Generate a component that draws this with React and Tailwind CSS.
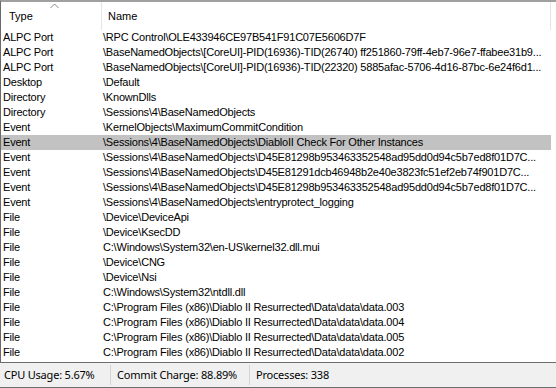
import React from "react";

const rows = [
  ["ALPC Port", "\\RPC Control\\OLE433946CE97B541F91C07E5606D7F"],
  ["ALPC Port", "\\BaseNamedObjects\\[CoreUI]-PID(16936)-TID(26740) ff251860-79ff-4eb7-96e7-ffabee31b9..."],
  ["ALPC Port", "\\BaseNamedObjects\\[CoreUI]-PID(16936)-TID(22320) 5885afac-5706-4d16-87bc-6e24f6d1..."],
  ["Desktop", "\\Default"],
  ["Directory", "\\KnownDlls"],
  ["Directory", "\\Sessions\\4\\BaseNamedObjects"],
  ["Event", "\\KernelObjects\\MaximumCommitCondition"],
  ["Event", "\\Sessions\\4\\BaseNamedObjects\\DiabloII Check For Other Instances", true],
  ["Event", "\\Sessions\\4\\BaseNamedObjects\\D45E81298b953463352548ad95dd0d94c5b7ed8f01D7C..."],
  ["Event", "\\Sessions\\4\\BaseNamedObjects\\D45E81291dcb46948b2e40e3823fc51ef2eb74f901D7C..."],
  ["Event", "\\Sessions\\4\\BaseNamedObjects\\D45E81298b953463352548ad95dd0d94c5b7ed8f01D7C..."],
  ["Event", "\\Sessions\\4\\BaseNamedObjects\\entryprotect_logging"],
  ["File", "\\Device\\DeviceApi"],
  ["File", "\\Device\\KsecDD"],
  ["File", "C:\\Windows\\System32\\en-US\\kernel32.dll.mui"],
  ["File", "\\Device\\CNG"],
  ["File", "\\Device\\Nsi"],
  ["File", "C:\\Windows\\System32\\ntdll.dll"],
  ["File", "C:\\Program Files (x86)\\Diablo II Resurrected\\Data\\data\\data.003"],
  ["File", "C:\\Program Files (x86)\\Diablo II Resurrected\\Data\\data\\data.004"],
  ["File", "C:\\Program Files (x86)\\Diablo II Resurrected\\Data\\data\\data.005"],
  ["File", "C:\\Program Files (x86)\\Diablo II Resurrected\\Data\\data\\data.002"],
];

export default function App() {
  return (
    <div
      className="w-[556px] h-[388px] flex flex-col bg-white overflow-hidden text-black"
      style={{ fontFamily: '"Liberation Sans", Arial, sans-serif' }}
    >
      <div className="h-[362px] flex flex-col border-t-2 border-t-[#a0a0a0] border-l border-l-[#696969] overflow-hidden">
        <div className="h-[28px] flex shrink-0 bg-white">
          <div className="w-[101px] relative border-r border-r-[#e5e5e5] flex items-center pl-[8px] text-[11px]">
            <svg className="absolute left-[49px] top-[1px]" width="9" height="6" viewBox="0 0 9 6">
              <path d="M0.5 5 L4.5 1 L8.5 5" fill="none" stroke="#8a8a8a" strokeWidth="1" />
            </svg>
            Type
          </div>
          <div className="w-[449px] border-r border-r-[#e5e5e5] flex items-center pl-[6px] text-[11px]">
            Name
          </div>
          <div className="flex-1" />
        </div>
        <div className="flex flex-col">
          {rows.map(([t, n, sel], i) => (
            <div
              key={i}
              className={`h-[15px] w-[550px] flex items-center text-[11px] leading-[15px] tracking-[-0.2px] whitespace-nowrap ${sel ? "bg-[#c2c2c2]" : ""}`}
            >
              <div className="w-[101px] shrink-0 pl-[2px] overflow-hidden">{t}</div>
              <div className="w-[449px] shrink-0 pl-[1px] overflow-hidden text-ellipsis">{n}</div>
            </div>
          ))}
        </div>
      </div>
      <div
        className="h-[26px] flex items-center bg-[#f0f0f0] border-t border-t-[#6e6e6e] border-b border-b-[#6e6e6e] text-[11px] tracking-[-0.2px] whitespace-nowrap"
        style={{ fontFamily: '"Noto Sans", "Open Sans", sans-serif' }}
      >
        <div className="w-[111px] h-[20px] flex items-center pl-[4px] border-r border-r-[#d4d4d4]">CPU Usage: 5.67%</div>
        <div className="w-[139px] h-[20px] flex items-center pl-[6px] border-r border-r-[#d4d4d4]">Commit Charge: 88.89%</div>
        <div className="flex-1 h-[20px] flex items-center pl-[6px]">Processes: 338</div>
      </div>
    </div>
  );
}
